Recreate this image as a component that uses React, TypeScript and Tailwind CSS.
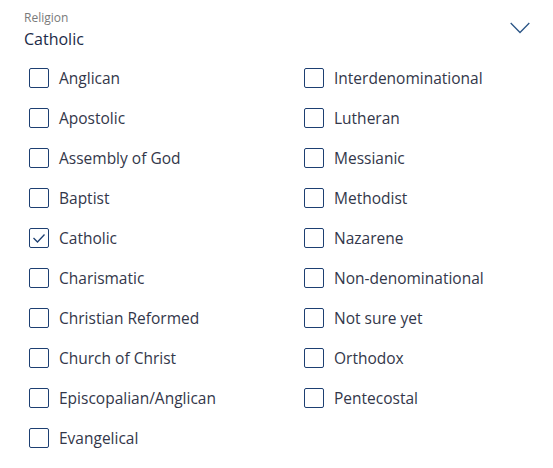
import React from "react";

const leftCol = [
  "Anglican",
  "Apostolic",
  "Assembly of God",
  "Baptist",
  "Catholic",
  "Charismatic",
  "Christian Reformed",
  "Church of Christ",
  "Episcopalian/Anglican",
  "Evangelical",
];

const rightCol = [
  "Interdenominational",
  "Lutheran",
  "Messianic",
  "Methodist",
  "Nazarene",
  "Non-denominational",
  "Not sure yet",
  "Orthodox",
  "Pentecostal",
];

const Option = ({ label, checked }: { label: string; checked: boolean }) => (
  <div className="flex h-10 items-center gap-[10px]">
    <span className="flex h-5 w-5 shrink-0 items-center justify-center rounded-[2px] border-[1.5px] border-[#1d3f72] bg-white">
      {checked && (
        <svg width="16" height="16" viewBox="0 0 16 16" fill="none">
          <path d="M2.5 8 L6.5 12 L13.5 4.5" stroke="#1d3f72" strokeWidth="1.3" />
        </svg>
      )}
    </span>
    <span className="text-[15.5px] leading-5 text-[#33374a]">{label}</span>
  </div>
);

export default function App() {
  const selected = "Catholic";

  return (
    <div className="w-[553px] h-[468px] bg-white font-['Open_Sans',sans-serif]">
      {/* Header */}
      <div className="flex justify-between pl-6 pr-[23px] pt-[10px]">
        <div>
          <div className="text-[12px] leading-4 text-[#7a7a7a]">Religion</div>
          <div className="mt-[1px] text-[16px] leading-6 text-[#1b2a48]">{selected}</div>
        </div>
        <svg className="mt-[12px]" width="20" height="12" viewBox="0 0 20 12" fill="none">
          <path d="M0.7 1 L10 10.5 L19.3 1" stroke="#2b5586" strokeWidth="1.3" />
        </svg>
      </div>

      {/* Options */}
      <div className="mt-[7px] grid grid-cols-[275px_1fr] pl-[29px]">
        <div className="flex flex-col">
          {leftCol.map((r) => (
            <Option key={r} label={r} checked={r === selected} />
          ))}
        </div>
        <div className="flex flex-col">
          {rightCol.map((r) => (
            <Option key={r} label={r} checked={r === selected} />
          ))}
        </div>
      </div>
    </div>
  );
}
